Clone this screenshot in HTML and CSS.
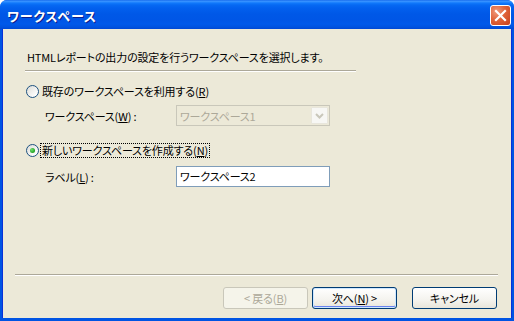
FILE: index.html
```html
<!DOCTYPE html>
<html lang="ja">
<head>
<meta charset="utf-8">
<link rel="stylesheet" href="styles.css">
</head>
<body>
<div class="window">
  <div class="titlebar">
    <span class="title">ワークスペース</span>
    <span class="close">
      <svg width="21" height="21" viewBox="0 0 21 21">
        <path d="M6 6 L15 15 M15 6 L6 15" stroke="#fff" stroke-width="2.2" stroke-linecap="square"/>
      </svg>
    </span>
  </div>
  <div class="client">
    <p class="intro">HTMLレポートの出力の設定を行うワークスペースを選択します。</p>
    <div class="sep sep-top"></div>
    <div class="option opt1">
      <span class="radio"></span>
      <span class="olabel">既存のワークスペースを利用する(<u>R</u>)</span>
    </div>
    <div class="field f1">
      <span class="flabel">ワークスペース(<u>W</u>) :</span>
      <div class="combo">
        <span class="ctext">ワークスペース1</span>
        <span class="drop">
          <svg width="9" height="6" viewBox="0 0 9 6"><path d="M1 1 L4.5 4.5 L8 1" fill="none" stroke="#c9c7ba" stroke-width="2"/></svg>
        </span>
      </div>
    </div>
    <div class="option opt2">
      <span class="radio checked"><span class="dot"></span></span>
      <span class="olabel focus">新しいワークスペースを作成する(<u>N</u>)</span>
    </div>
    <div class="field f2">
      <span class="flabel">ラベル(<u>L</u>) :</span>
      <div class="textbox">ワークスペース2</div>
    </div>
    <div class="spacer"></div>
    <div class="sep sep-bottom"></div>
    <div class="buttons">
      <span class="btn disabled">&lt; 戻る(<u>B</u>)</span>
      <span class="btn default">次へ(<u>N</u>) &gt;</span>
      <span class="btn cancel">キャンセル</span>
    </div>
  </div>
</div>
</body>
</html>
```

FILE: styles.css
```css
* { box-sizing: border-box; }
html, body {
  margin: 0;
  padding: 0;
  width: 514px;
  height: 321px;
  background: #ffffff;
  overflow: hidden;
}
body {
  font-family: "Noto Sans CJK JP", "Noto Sans", sans-serif;
  font-size: 11px;
  letter-spacing: -0.15px;
  font-feature-settings: "palt";
  color: #000;
}
.window {
  width: 514px;
  height: 321px;
  display: flex;
  flex-direction: column;
  border-radius: 7px 7px 0 0;
  background: #0054e3;
  overflow: hidden;
}
.titlebar {
  height: 29px;
  flex: none;
  display: flex;
  align-items: center;
  justify-content: space-between;
  padding: 0 3px 0 7px;
  background: linear-gradient(to bottom,
    #0a5fe8 0px, #3d95ff 1px, #2a8bff 2px, #1179fb 3px, #0669f3 5px,
    #0260ee 8px, #0058e7 14px, #0056e6 20px, #0059ea 24px, #0053e0 27px, #0048d5 29px);
}
.title {
  color: #fff;
  font-weight: bold;
  font-size: 13px;
  letter-spacing: 0.8px;
  text-shadow: 1px 1px 0 #0a1e8c;
  padding-top: 1px;
}
.close {
  width: 21px;
  height: 21px;
  margin-top: 1px;
  border: 1px solid #fff;
  border-radius: 3px;
  background: radial-gradient(circle at 30% 30%, #f09a7c 0%, #e0643a 45%, #c7401a 100%);
  display: flex;
}
.close svg { display: block; margin: -1px; }
.client {
  flex: 1;
  margin: 0 3px 3px 3px;
  background: #ece9d8;
  display: flex;
  flex-direction: column;
  box-shadow: -1px 0 0 #0831d9, 1px 0 0 #0831d9;
}
.intro {
  margin: 18px 0 0 24px;
  height: 20px;
  line-height: 20px;
}
.sep {
  height: 2px;
  border-top: 1px solid #aca899;
  border-bottom: 1px solid #ffffff;
}
.sep-top {
  margin: 3px 0 0 22px;
  width: 331px;
}
.option {
  display: flex;
  align-items: center;
  height: 15px;
}
.opt1 { margin: 12px 0 0 23px; }
.opt2 { margin: 17px 0 0 23px; }
.radio {
  width: 13px;
  height: 13px;
  border-radius: 50%;
  border: 1px solid #1c5180;
  background: linear-gradient(135deg, #dcdcd7 0%, #ffffff 85%);
  margin-right: 3px;
  display: flex;
  align-items: center;
  justify-content: center;
  flex: none;
}
.dot {
  width: 5px;
  height: 5px;
  border-radius: 50%;
  background: radial-gradient(circle at 35% 35%, #6fe06f 0%, #21a121 70%);
}
.olabel {
  line-height: 13px;
  height: 15px;
  padding: 0 1px;
  border: 1px solid transparent;
  display: flex;
  align-items: center;
  margin-left: -2px;
}
.olabel.focus { border: 1px dotted #000; }
.field {
  display: flex;
  align-items: center;
  padding-left: 42px;
  height: 21px;
}
.f1 { margin-top: 6px; }
.f2 { margin-top: 8px; }
.flabel {
  width: 131px;
  flex: none;
}
.combo {
  width: 154px;
  height: 21px;
  border: 1px solid #c9c7ba;
  background: #ece9d8;
  display: flex;
  align-items: center;
  justify-content: space-between;
  padding: 1px 1px 1px 3px;
  color: #aca899;
}
.drop {
  width: 17px;
  height: 17px;
  background: #f7f7f4;
  border: 1px solid #e8e6dc;
  border-radius: 1px;
  display: flex;
  align-items: center;
  justify-content: center;
}
.textbox {
  width: 154px;
  height: 21px;
  border: 1px solid #7f9db9;
  background: #fff;
  padding: 0 3px;
  line-height: 19px;
}
.spacer { flex: 1; }
.sep-bottom {
  margin: 0 0 0 12px;
  width: 483px;
}
.buttons {
  display: flex;
  gap: 4px;
  padding: 11px 14px 9px 0;
  justify-content: flex-end;
}
.btn {
  width: 85px;
  height: 22px;
  border: 1px solid #003c74;
  border-radius: 3px;
  background: linear-gradient(to bottom, #ffffff 0%, #f4f3ee 60%, #e8e5da 100%);
  display: flex;
  align-items: center;
  justify-content: center;
}
.btn.default {
  box-shadow: inset 0 0 0 1px #cee7ff, inset 0 -1px 0 1px #6982ee;
}
.btn.disabled {
  border-color: #c9c7ba;
  background: #f5f4ea;
  color: #aca899;
}
.btn.cancel { margin-left: 11px; }
u { text-decoration: underline; text-underline-offset: 1px; }
```
